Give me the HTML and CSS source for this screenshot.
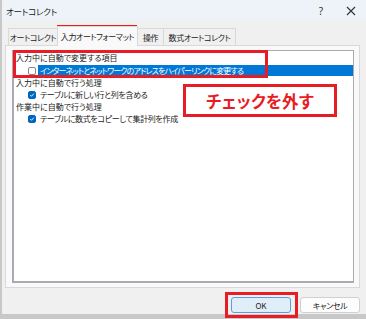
FILE: index.html
```html
<!DOCTYPE html>
<html lang="ja">

<head>
  <meta charset="UTF-8" />
  <meta name="viewport" content="width=device-width, initial-scale=1.0" />
  <title>オートコレクト</title>
  <link rel="stylesheet" href="styles.css">
</head>

<body>
  <div class="screen">
    <div class="window">
      <div class="titlebar">
        <span class="title">オートコレクト</span>
        <span class="help">?</span>
        <span class="close">
          <svg width="10" height="10" viewBox="0 0 10 10">
            <path d="M1 1 L9 9 M9 1 L1 9" stroke="#333" stroke-width="1.1" fill="none" />
          </svg>
        </span>
      </div>

      <div class="tabs">
        <div class="tab tab-auto">オートコレクト</div>
        <div class="tab tab-format active">入力オートフォーマット</div>
        <div class="tab tab-action">操作</div>
        <div class="tab tab-math">数式オートコレクト</div>
      </div>

      <div class="panel">
        <div class="list">
          <div class="group-title first">入力中に自動で変更する項目</div>
          <div class="check-row selected">
            <span class="box"></span>
            <span class="label">インターネットとネットワークのアドレスをハイパーリンクに変更する</span>
          </div>
          <div class="group-title">入力中に自動で行う処理</div>
          <div class="check-row">
            <span class="box checked">
              <svg width="8" height="8" viewBox="0 0 8 8">
                <path d="M1.7 4.1 L3.3 5.7 L6.4 2.3" stroke="#fff" stroke-width="1.2" fill="none" />
              </svg>
            </span>
            <span class="label">テーブルに新しい行と列を含める</span>
          </div>
          <div class="group-title">作業中に自動で行う処理</div>
          <div class="check-row">
            <span class="box checked">
              <svg width="8" height="8" viewBox="0 0 8 8">
                <path d="M1.7 4.1 L3.3 5.7 L6.4 2.3" stroke="#fff" stroke-width="1.2" fill="none" />
              </svg>
            </span>
            <span class="label">テーブルに数式をコピーして集計列を作成</span>
          </div>
        </div>
      </div>

      <div class="footer">
        <button class="btn btn-ok">OK</button>
        <button class="btn btn-cancel">キャンセル</button>
      </div>
    </div>

    <!-- annotations -->
    <div class="mark mark-tab"></div>
    <div class="mark mark-item"></div>
    <div class="mark mark-ok"></div>
    <div class="callout">チェックを外す</div>
  </div>
</body>

</html>
```

FILE: styles.css
```css
* {
  margin: 0;
  padding: 0;
  box-sizing: border-box;
}

body {
  font-family: "Noto Sans CJK JP", "Noto Sans", sans-serif;
  font-feature-settings: "palt";
  font-size: 8px;
  color: #1a1a1a;
  background: #c8c8c8;
  width: 366px;
  height: 319px;
  overflow: hidden;
  white-space: nowrap;
}

.screen {
  position: relative;
  width: 366px;
  height: 319px;
}

.window {
  margin-left: 2px;
  width: 364px;
  height: 314px;
  background: #f0f0f0;
  display: flex;
  flex-direction: column;
}

.titlebar {
  height: 21px;
  background: #eef3f9;
  display: flex;
  align-items: center;
  padding-left: 4px;
}

.title {
  flex: 1;
  font-size: 8.5px;
  letter-spacing: -0.2px;
}

.help {
  font-family: "Noto Sans", sans-serif;
  font-size: 10px;
  color: #333;
  width: 30px;
  text-align: center;
}

.close {
  width: 30px;
  display: flex;
  justify-content: center;
}

/* tabs */
.tabs {
  margin-top: 5px;
  height: 19px;
  display: flex;
  align-items: flex-end;
  padding-left: 6px;
}

.tab {
  height: 17px;
  display: flex;
  align-items: center;
  justify-content: center;
  border: 1px solid #d9d9d9;
  border-bottom: none;
  background: #f0f0f0;
  margin-right: -1px;
  letter-spacing: -0.4px;
}

.tab.active {
  background: #f9f9f9;
  position: relative;
  margin-bottom: -1px;
  height: 20px;
  padding-bottom: 1px;
  z-index: 1;
}

.tab-auto { width: 50px; }
.tab-format { width: 81px; }
.tab-action { width: 27px; }
.tab-math { width: 73px; }

.panel {
  margin-left: 3px;
  width: 355px;
  height: 243px;
  background: #f9f9f9;
  border: 1px solid #d9d9d9;
  padding: 4px 5px 4px 6px;
}

.list {
  height: 100%;
  background: #fff;
  border: 1px solid #aaaab4;
  border-left-width: 2px;
  border-bottom-width: 2px;
}

.group-title {
  height: 12px;
  line-height: 12px;
  padding-left: 2px;
}

.group-title.first {
  height: 13px;
  line-height: 13px;
}

.check-row {
  height: 12px;
  display: flex;
  align-items: center;
  padding-left: 14px;
}

.check-row.selected {
  height: 13px;
}

.box {
  width: 8px;
  height: 8px;
  border: 1px solid #868686;
  border-radius: 2px;
  background: #fff;
  display: flex;
  align-items: center;
  justify-content: center;
}

.box.checked {
  background: #0067c0;
  border-color: #0067c0;
}

.label {
  margin-left: 2px;
  padding-left: 2px;
  line-height: 12px;
  letter-spacing: -0.35px;
}

.check-row.selected .label {
  flex: 1;
  background: #0078d7;
  color: #fff;
  height: 11px;
  line-height: 11px;
  letter-spacing: -0.85px;
}

/* footer */
.footer {
  margin-top: 9px;
  display: flex;
  justify-content: flex-end;
  gap: 9px;
  padding-right: 6px;
}

.btn {
  width: 60px;
  height: 16px;
  font-family: inherit;
  font-feature-settings: "palt";
  font-size: 8px;
  color: #1a1a1a;
  background: #fdfdfd;
  border: 1px solid #d0d0d0;
  border-radius: 3px;
}

.btn-ok {
  background: #e0eef9;
  border-color: #5a9ee0;
}

.btn-cancel {
  letter-spacing: -0.4px;
}

/* red annotations */
.mark,
.callout {
  position: absolute;
  border: 3px solid #e81c24;
}

.mark-tab {
  left: 57px;
  top: 25px;
  width: 80px;
  height: 19px;
}

.mark-item {
  left: 13px;
  top: 50px;
  width: 255px;
  height: 28px;
}

.mark-ok {
  left: 225px;
  top: 292px;
  width: 73px;
  height: 26px;
}

.callout {
  left: 183px;
  top: 84px;
  width: 154px;
  height: 33px;
  background: #fff;
  color: #e81c24;
  font-size: 16.5px;
  font-weight: 700;
  display: flex;
  align-items: center;
  justify-content: center;
  letter-spacing: 0.3px;
}
```
